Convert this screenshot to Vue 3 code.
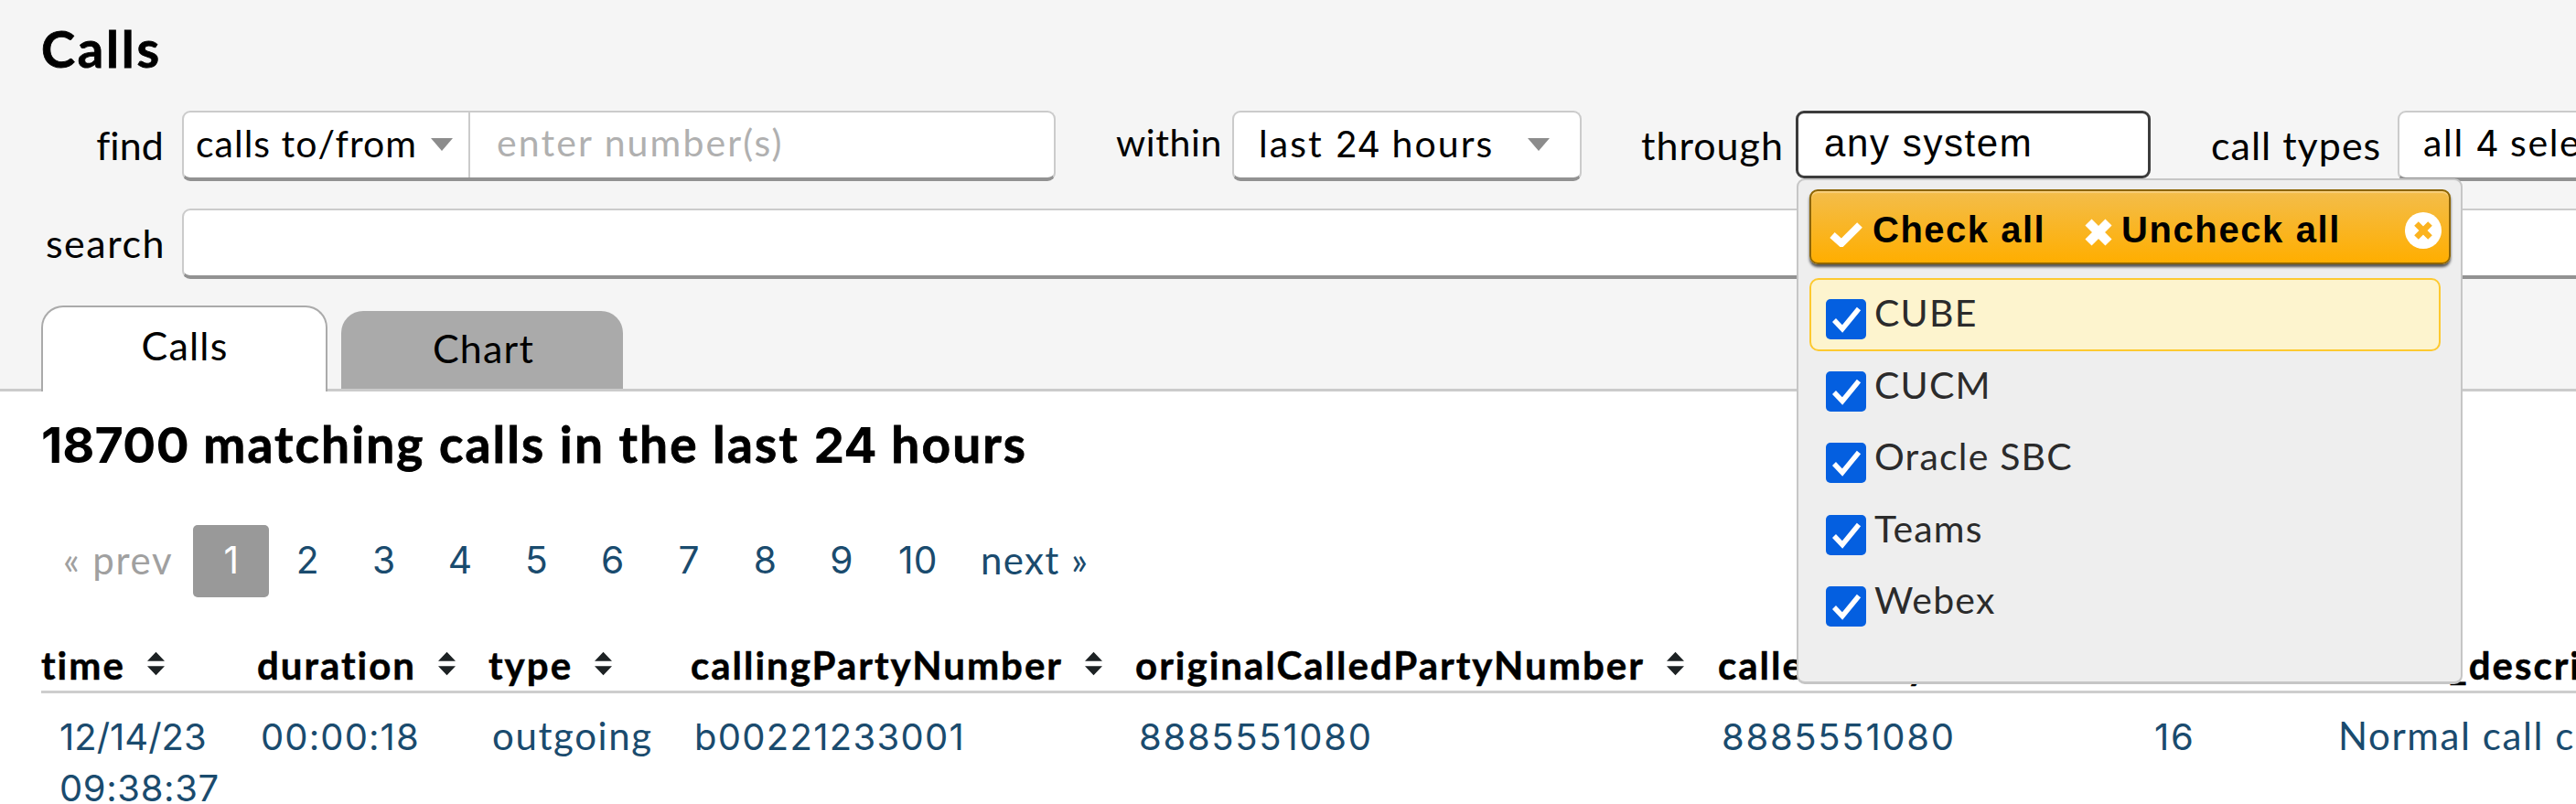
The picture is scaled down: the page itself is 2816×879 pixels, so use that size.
<template>
  <div class="page">
    <header class="filters">
      <h1>Calls</h1>

      <div class="filter-row">
        <label class="label label-left find-label">find</label>
        <div class="field find-field">
          <div class="find-mode">
            <span class="find-mode-text">calls to/from</span>
            <span class="caret"></span>
          </div>
          <div class="find-input">enter number(s)</div>
        </div>

        <label class="label within-label">within</label>
        <div class="field within-field">
          <span class="within-text">last <span class="num">24</span> hours</span>
          <span class="caret"></span>
        </div>

        <label class="label through-label">through</label>
        <div class="through">
          <div class="field through-field">any system</div>

          <!-- multiselect menu, opens over the content below -->
          <div class="menu">
            <div class="menu-header">
              <svg class="icon-check" viewBox="0 0 36 28"><path d="M3 15 L13 24 L33 4" /></svg>
              <span class="menu-link check-all">Check all</span>
              <svg class="icon-x" viewBox="0 0 32 32"><path d="M5 5 L27 27 M27 5 L5 27" /></svg>
              <span class="menu-link uncheck-all">Uncheck all</span>
              <svg class="icon-close" viewBox="0 0 40 40">
                <circle cx="20" cy="20" r="20" />
                <path d="M12.5 12.5 L27.5 27.5 M27.5 12.5 L12.5 27.5" />
              </svg>
            </div>
            <ul class="options">
              <li v-for="s in systems" :key="s.name" class="option" :class="{ hover: s.name === hovered }" @click="s.checked = !s.checked">
                <span class="checkbox" :class="{ checked: s.checked }">
                  <svg v-if="s.checked" viewBox="0 0 44 44"><path d="M9 23 L18 32.5 L36 10.5" /></svg>
                </span>
                <span>{{ s.name }}</span>
              </li>
            </ul>
          </div>
        </div>

        <label class="label types-label">call types</label>
        <div class="field types-field">all <span class="num">4</span> selected</div>
      </div>

      <div class="filter-row search-row">
        <label class="label label-left">search</label>
        <div class="field search-field"></div>
      </div>

      <nav class="tabs">
        <a class="tab active">Calls</a>
        <a class="tab">Chart</a>
      </nav>
    </header>

    <main class="results">
      <h2><span class="num">18700</span> matching calls in the last <span class="num">24</span> hours</h2>

      <div class="pager">
        <span class="prev">« prev</span>
        <a v-for="p in 10" :key="p" class="page-no num" :class="{ current: p === page }">{{ p }}</a>
        <a class="next">next »</a>
      </div>

      <div class="table">
        <div class="tr head">
          <div v-for="c in columns" :key="c" class="th">
            <span>{{ c }}</span>
            <svg class="sort" viewBox="0 0 20 27"><path d="M10 0 L20 10.5 H0 Z M0 16.5 H20 L10 27 Z" /></svg>
          </div>
        </div>
        <div v-for="(r, i) in calls" :key="i" class="tr">
          <div class="td num date"><div>{{ r.date }}</div><div class="clock">{{ r.clock }}</div></div>
          <div class="td num duration">{{ r.duration }}</div>
          <div class="td">{{ r.type }}</div>
          <div class="td num calling">{{ r.calling }}</div>
          <div class="td num">{{ r.original }}</div>
          <div class="td num">{{ r.called }}</div>
          <div class="td num">{{ r.cause }}</div>
          <div class="td">{{ r.description }}</div>
        </div>
      </div>
    </main>
  </div>
</template>

<script setup>
import { ref } from 'vue'

const page = ref(1)
const hovered = ref('CUBE')

const systems = ref([
  { name: 'CUBE', checked: true },
  { name: 'CUCM', checked: true },
  { name: 'Oracle SBC', checked: true },
  { name: 'Teams', checked: true },
  { name: 'Webex', checked: true },
])

const columns = ['time', 'duration', 'type', 'callingPartyNumber', 'originalCalledPartyNumber', 'calledPartyNumber', 'cause', 'cause_description']

const calls = [
  {
    date: '12/14/23',
    clock: '09:38:37',
    duration: '00:00:18',
    type: 'outgoing',
    calling: 'b00221233001',
    original: '8885551080',
    called: '8885551080',
    cause: '16',
    description: 'Normal call clearing',
  },
]
</script>

<style>
body {
  background: #fff;
  overflow: hidden;
}
</style>

<style scoped>
* {
  box-sizing: border-box;
  margin: 0;
  padding: 0;
}

.page {
  width: 2816px;
  height: 879px;
  overflow: hidden;
  background: #fff;
  color: #000;
  font-family: Lato, "Open Sans", sans-serif;
  font-size: 42px;
  white-space: nowrap;
}

.num {
  font-family: Inter, Lato, sans-serif;
  font-size: 0.97em;
  letter-spacing: 0;
}

/* ---- filters ---- */
.filters {
  display: flex;
  flex-direction: column;
  height: 428px;
  background: #f5f5f5;
  border-bottom: 3px solid #cbcbcb;
}

h1 {
  height: 121px;
  padding: 0 45px;
  font-size: 56px;
  line-height: 105px;
  letter-spacing: 2.8px;
  -webkit-text-stroke: 0.8px #000;
}

.filter-row {
  display: flex;
  flex: none;
  height: 77px;
}

.search-row {
  margin-top: 30px;
}

.label {
  flex: none;
  font-size: 43px;
  line-height: 75px;
  letter-spacing: 1.5px;
}

.label-left {
  width: 199px;
  padding-right: 18px;
  text-align: right;
}

.find-label {
  padding-right: 20px;
  letter-spacing: 0.1px;
}

.field {
  flex: none;
  display: flex;
  height: 77px;
  background: #fff;
  border: 2px solid #cbcbcb;
  border-bottom: 4px solid #929292;
  border-radius: 9px;
  line-height: 65px;
  font-size: 41px;
  letter-spacing: 1.7px;
}

.caret {
  margin-bottom: 2px;
  border: 12px solid transparent;
  border-top: 14px solid #8c8c8c;
  border-bottom: 0;
}

.find-field {
  width: 955px;
}

.find-mode {
  display: flex;
  align-items: center;
  justify-content: space-between;
  width: 313px;
  padding: 0 17px 0 13px;
  border-right: 2px solid #cbcbcb;
}

.find-mode-text {
  margin-top: -4px;
  letter-spacing: 1px;
}

.find-input {
  padding-left: 29px;
  color: #b0b0b0;
  letter-spacing: 2.1px;
}

.within-label {
  width: 193px;
  padding-left: 66px;
  font-size: 41px;
  line-height: 70px;
  letter-spacing: 0.6px;
}

.within-field {
  align-items: center;
  justify-content: space-between;
  width: 382px;
  padding: 0 33px 0 27px;
}

.within-text {
  margin-top: -4px;
  letter-spacing: 2.1px;
}

.through-label {
  width: 234px;
  padding-left: 65px;
  letter-spacing: 1px;
}

.through {
  position: relative;
  flex: none;
  width: 388px;
}

.through-field {
  height: 74px;
  padding-left: 28px;
  border: 3px solid #3c3c3c;
  font-family: "Liberation Sans", Arial, sans-serif;
  font-size: 42px;
  letter-spacing: 1.6px;
}

.types-label {
  width: 270px;
  padding-left: 66px;
  letter-spacing: 1px;
}

.types-field {
  display: block;
  width: 388px;
  padding-left: 26px;
}

.search-field {
  width: 2700px;
}

/* ---- system menu ---- */
.menu {
  position: absolute;
  z-index: 10;
  top: 74px;
  left: 1px;
  width: 728px;
  height: 553px;
  padding: 10px 11px 0 12px;
  background: #eee;
  border: 2px solid #c6c6c6;
  border-bottom-width: 3px;
  border-radius: 9px;
}

.menu-header {
  display: flex;
  align-items: center;
  height: 82px;
  padding: 0 8px 0 20px;
  background: linear-gradient(#f3bd4b, #ffae00);
  border: 2px solid #8d6500;
  border-radius: 9px;
  box-shadow: 0 3px 3px rgba(0, 0, 0, 0.65), inset 0 2px 1px #f8cf7d;
  font-family: "Liberation Sans", Arial, sans-serif;
  font-size: 40px;
  font-weight: 700;
}

.menu-header svg {
  flex: none;
  fill: none;
  stroke: #fff;
  stroke-width: 8;
}

.icon-check {
  width: 36px;
  height: 28px;
  margin-top: 16px;
}

.menu-link {
  margin-top: 6px;
}

.check-all {
  width: 242px;
  padding-left: 11px;
  letter-spacing: 1.5px;
}

.icon-x {
  width: 32px;
  height: 32px;
  margin-top: 11px;
}

.menu-header .icon-x {
  stroke-width: 10;
}

.uncheck-all {
  flex: 1;
  padding-left: 9px;
  letter-spacing: 1.6px;
}

.icon-close {
  width: 40px;
  height: 40px;
  margin-top: 8px;
}

.menu-header .icon-close circle {
  fill: #fff;
  stroke: none;
}

.menu-header .icon-close path {
  stroke: #fbb31f;
  stroke-width: 6.5;
}

.options {
  margin: 15px 11px 0 0;
  list-style: none;
}

.option {
  display: flex;
  height: 80px;
  margin-bottom: -1.5px;
  padding: 0 16px;
  border: 2px solid transparent;
  border-radius: 10px;
  font-size: 41px;
  line-height: 72px;
  letter-spacing: 1.2px;
  color: #2b2b2b;
}

.option.hover {
  background: #fdf4ce;
  border-color: #fdc92f;
}

.checkbox {
  width: 44px;
  height: 44px;
  margin: 21px 9px 0 0;
  background: #fff;
  border-radius: 5px;
}

.checkbox.checked {
  background: #045fe0;
}

.checkbox svg {
  display: block;
  fill: none;
  stroke: #fff;
  stroke-width: 5.5;
}

/* ---- tabs ---- */
.tabs {
  display: flex;
  align-items: flex-end;
  gap: 15px;
  height: 94px;
  margin: auto 0 -3px;
  padding-left: 45px;
}

.tab {
  width: 308px;
  height: 85px;
  margin-bottom: 3px;
  padding-left: 3px;
  background: #aaa;
  border-radius: 24px 24px 0 0;
  font-size: 43px;
  line-height: 82px;
  letter-spacing: 1.2px;
  text-align: center;
}

.tab.active {
  width: 313px;
  height: 94px;
  margin-bottom: 0;
  padding-left: 1px;
  background: #fff;
  border: 2px solid #aaa;
  border-bottom: 0;
  line-height: 83px;
}

/* ---- results ---- */
.results {
  padding-left: 45px;
}

h2 {
  height: 146px;
  font-size: 55px;
  line-height: 115px;
  letter-spacing: 2.1px;
  -webkit-text-stroke: 0.8px #000;
}

h2 .num {
  font-size: 54px;
  -webkit-text-stroke: 0;
}

.pager {
  display: flex;
  height: 79px;
  font-size: 42px;
  line-height: 76px;
  letter-spacing: 1.7px;
  color: #1a4b6e;
}

.prev {
  width: 166px;
  padding-left: 24px;
  color: #a0a0a0;
}

.page-no {
  width: 83.4px;
  line-height: 78px;
  text-align: center;
}

.page-no.current {
  background: #999;
  border-radius: 5px;
  color: #fff;
}

.next {
  padding-left: 27px;
  letter-spacing: 1.4px;
}

.tr {
  display: grid;
  grid-template-columns: 236px 253px 221px 486px 637px 473px 201px 600px;
  width: 2900px;
  line-height: 56px;
  color: #1a4b6e;
}

.head {
  height: 105px;
  padding-top: 46px;
  border-bottom: 3px solid #cdcdcd;
  color: #000;
  font-weight: 700;
  letter-spacing: 2px;
  -webkit-text-stroke: 0.5px #000;
}

.th {
  display: flex;
  align-items: center;
  height: 56px;
  gap: 24px;
}

.th:last-child {
  padding-left: 9px;
}

.sort {
  width: 19px;
  height: 27px;
  margin-bottom: 4px;
  fill: #1d2224;
}

.td {
  padding: 18px 0 0 4px;
  letter-spacing: 1.6px;
}

.td.num {
  padding-top: 20px;
  font-size: 40px;
  letter-spacing: 1.7px;
}

.td.duration {
  letter-spacing: 1.1px;
}

.td.calling {
  letter-spacing: 1.3px;
}

.td.date {
  padding-left: 20px;
  letter-spacing: 0;
}

.clock {
  letter-spacing: 0.6px;
}
</style>
